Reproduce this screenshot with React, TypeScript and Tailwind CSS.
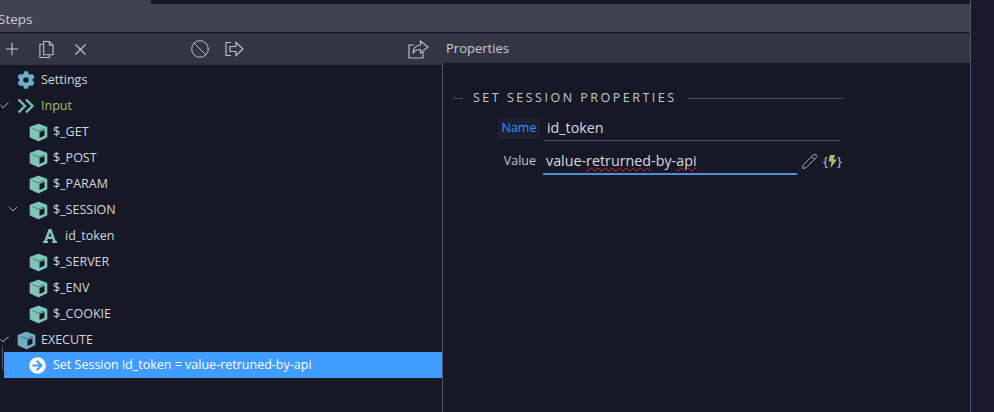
import React from 'react';
import { Plus, X, Ban, Check, ChevronDown, Pencil } from 'lucide-react';
import { FaCog, FaFont, FaArrowCircleRight } from 'react-icons/fa';

const Cube = ({ color = '#80c6b8' }: { color?: string }) => (
  <svg width="19" height="19" viewBox="0 0 19 19" className="shrink-0">
    <path d="M9.500 1.500 L17.500 4.500 V13.800 L9.500 17.500 L1.500 13.800 V4.500 Z" fill={color} stroke={color} strokeWidth="1.6" strokeLinejoin="round" />
    <path d="M3.500 5.500 L9.500 8 L15.500 5.500" fill="none" stroke="#161925" strokeWidth="1" opacity="0.45" />
    <path d="M10.500 9 L15.500 7 V12.800 L10.500 15 Z" fill="#161925" />
  </svg>
);

const DoubleChevron = () => (
  <svg width="18" height="16" viewBox="0 0 18 16" className="shrink-0" fill="none" stroke="#73c0b0" strokeWidth="2.4">
    <path d="M1.500 1.500 L8 8 L1.500 14.500" />
    <path d="M9 1.500 L15.500 8 L9 14.500" />
  </svg>
);

const Row = ({ label, indent, icon, toggle, color = 'text-[#d3d6df]' }: { label: string; indent: string; icon: React.ReactNode; toggle?: 'check' | 'down'; color?: string }) => (
  <div className={`h-[26px] flex items-center relative pt-[2px] ${indent}`}>
    {toggle === 'check' && <Check size={11} strokeWidth={2} className="absolute left-[-1px] top-[8px] text-[#c3c6ce]" />}
    {toggle === 'down' && <ChevronDown size={16} strokeWidth={1.3} className="absolute left-[5px] top-[5px] text-[#b9bcc5]" />}
    {icon}
    <span className={`text-[12.5px] ${color}`}>{label}</span>
  </div>
);

const App = () => {
  return (
    <div className="w-[994px] h-[412px] flex bg-[#1b1730] overflow-hidden font-['Open_Sans',sans-serif]">
      <div className="w-[970px] flex flex-col bg-[#161925]">
        {/* top strip */}
        <div className="h-1 flex">
          <div className="w-[151px] bg-[#40434e]" />
          <div className="flex-1 bg-[#161925]" />
        </div>
        <div className="h-[28px] bg-[#40434e] flex items-center pt-[2px]">
          <span className="text-[13.5px] text-[#c9ccd4] ml-[-2px]">Steps</span>
        </div>
        <div className="h-px bg-[#14151e]" />
        {/* toolbar */}
        <div className="h-[30px] bg-[#333641] flex items-center text-[#b8bbc3]">
          <div className="w-[442px] flex items-center h-[32px] bg-[#333641] self-start">
            <Plus size={20} strokeWidth={1.3} className="ml-[2px] text-[#c4c7ce]" />
            <svg width="17" height="19" viewBox="0 0 18 19" fill="none" stroke="currentColor" strokeWidth="1.2" className="ml-[16px]">
              <path d="M6 1h6l4 4v10H6z" />
              <path d="M6 4H2v14h10v-3" />
              <path d="M12 1v4h4" />
            </svg>
            <X size={19} strokeWidth={1.4} className="ml-[16px] text-[#c4c7ce]" />
            <Ban size={20} strokeWidth={1.2} className="ml-[100px]" />
            <svg width="19" height="16" viewBox="0 0 19 16" fill="none" stroke="currentColor" strokeWidth="1.2" className="ml-[15px]">
              <path d="M6 1.500H1v13h5" />
              <path d="M5 5.500h6V1.500l7 6.500-7 6.500v-4H5z" />
            </svg>
            <svg width="21" height="19" viewBox="0 0 21 19" fill="none" stroke="currentColor" strokeWidth="1.2" className="ml-[164px]">
              <path d="M15 12v6H1V5h5" />
              <path d="M12.500 1l7.500 6-7.500 6V9.500c-3.500 0-6 1-7.500 4 0-5 3-8 7.500-8.500z" />
            </svg>
          </div>
          <span className="text-[13px] text-[#c9ccd4] ml-[4px] pt-[2px]">Properties</span>
        </div>
        <div className="flex-1 flex">
          {/* tree */}
          <div className="w-[442px] pt-[3px] relative">
            <Row label="Settings" indent="pl-[17px]" icon={<FaCog size={18} className="mr-[6px] text-[#6eb0c6] shrink-0" />} />
            <Row label="Input" indent="pl-[17px]" toggle="check" color="text-[#a3bd72]" icon={<span className="mr-[6px] flex"><DoubleChevron /></span>} />
            {['$_GET', '$_POST', '$_PARAM'].map(l => (
              <Row key={l} label={l} indent="pl-[29px]" icon={<span className="mr-[5px] flex"><Cube /></span>} />
            ))}
            <Row label="$_SESSION" indent="pl-[29px]" toggle="down" icon={<span className="mr-[5px] flex"><Cube /></span>} />
            <Row label="id_token" indent="pl-[42px]" icon={<FaFont size={16} className="mr-[7px] text-[#80c6b8] shrink-0" />} />
            {['$_SERVER', '$_ENV', '$_COOKIE'].map(l => (
              <Row key={l} label={l} indent="pl-[29px]" icon={<span className="mr-[5px] flex"><Cube /></span>} />
            ))}
            <Row label="EXECUTE" indent="pl-[17px]" toggle="check" icon={<span className="mr-[5px] flex"><Cube color="#6eaec2" /></span>} />
            <div className="h-[26px] ml-[4px] bg-[#409cff] flex items-center pl-[25px] pt-[1px] relative">
              <FaArrowCircleRight size={17} className="text-white mr-[7px] shrink-0" />
              <span className="text-[12.5px] text-white">Set Session id_token = value-retruned-by-api</span>
              {/* tree guide line hanging off EXECUTE */}
              <div className="absolute left-[-2px] top-[-6px] w-[2px] h-[24px] border-l border-b border-[#55575f] rounded-bl-[2px]" />
            </div>
          </div>
          {/* properties */}
          <div className="flex-1 border-l border-[#55575f] pl-[10px] pt-[26px]">
            <div className="flex items-center w-[391px]">
              <div className="w-[10px] h-px bg-[#4a4c55]" />
              <span className="ml-[10px] text-[12.5px] tracking-[2.5px] text-[#c3c7d0]">SET SESSION PROPERTIES</span>
              <div className="flex-1 h-px bg-[#4a4c55] ml-[11px]" />
            </div>
            <div className="flex items-center mt-[8px]">
              <span className="ml-[45px] w-[42px] h-[21px] rounded bg-[#1b2130] text-[#3f8cff] text-[12.5px] flex items-center justify-center">Name</span>
              <div className="ml-[4px] w-[297px] h-[25px] border-b border-[#4a4c55] flex items-center pl-[3px] text-[#d7dae2] text-[14.3px]">id_token</div>
            </div>
            <div className="flex items-center mt-[8px]">
              <span className="ml-[48px] w-[35px] text-right text-[#c3c7d0] text-[12.5px]">Value</span>
              <div className="ml-[7px] w-[254px] h-[26px] border-b-2 border-[#4f8fd6] flex items-center pl-[3px] text-[#d7dae2] text-[14.3px]">
                <span>value-</span>
                <span className="underline decoration-wavy decoration-[#e0282e] decoration-1">retrurned</span>
                <span>-by-</span>
                <span className="underline decoration-wavy decoration-[#e0282e] decoration-1">api</span>
              </div>
              <Pencil size={17} strokeWidth={1.4} className="ml-[4px] text-[#a9acb4] -scale-x-100 rotate-90" />
              <span className="ml-[5px] text-[13px] text-[#c3c7d0] flex items-center">
                {'{'}
                <svg width="9" height="13" viewBox="0 0 9 13">
                  <path d="M2 0h5L5.500 4.500H9L2.500 13l1-6.500H0.500z" fill="#a3bd72" />
                </svg>
                {'}'}
              </span>
            </div>
          </div>
        </div>
      </div>
      <div className="w-px bg-[#55575f]" />
    </div>
  );
};

export default App;
